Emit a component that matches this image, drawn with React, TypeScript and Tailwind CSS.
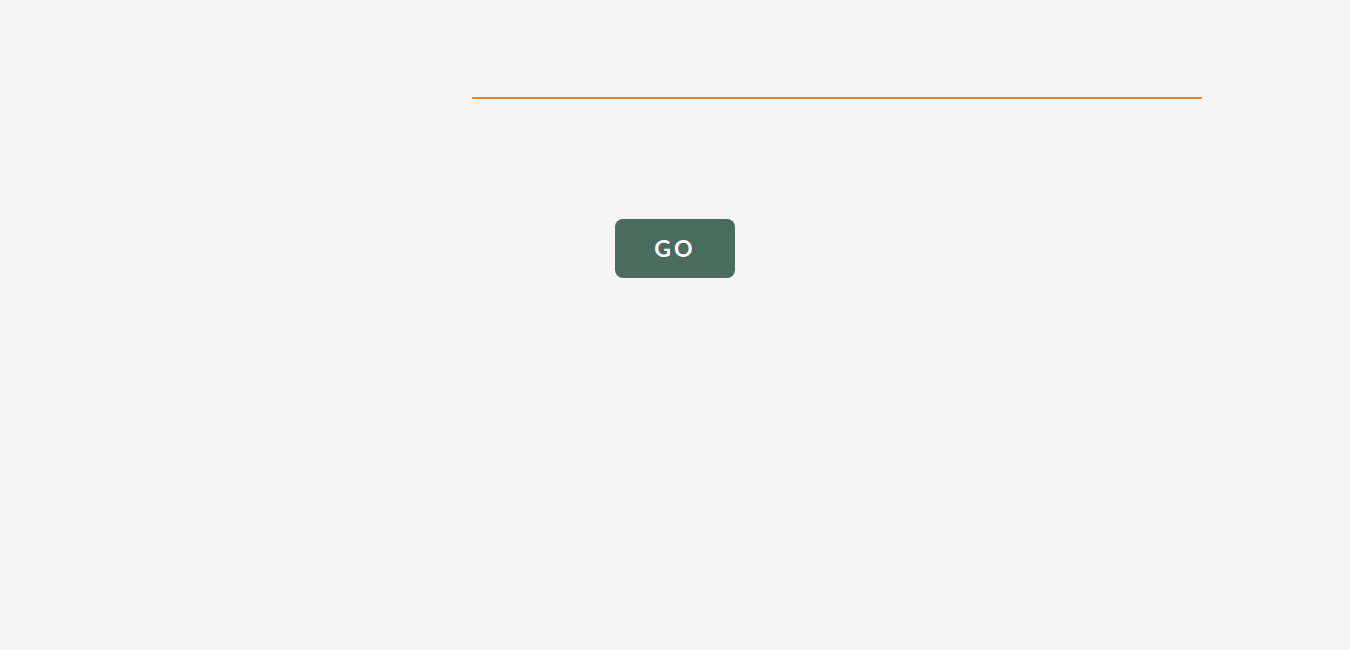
export default function App() {
  return (
    <div className="min-h-[650px] w-full bg-[#f5f5f5] font-['Lato','Open_Sans',sans-serif]">
      <div className="flex flex-col pt-[60px]">
        <input
          type="text"
          aria-label="search"
          className="ml-[472px] h-[39px] w-[730px] border-b-2 border-[#e8862a] bg-transparent px-2 text-lg text-[#333] outline-none"
        />
        <button className="ml-[615px] mt-[120px] flex h-[59px] w-[120px] items-center justify-center rounded-lg bg-[#4a6b5d] text-[23px] font-bold tracking-[3px] text-white">
          GO
        </button>
      </div>
    </div>
  );
}
